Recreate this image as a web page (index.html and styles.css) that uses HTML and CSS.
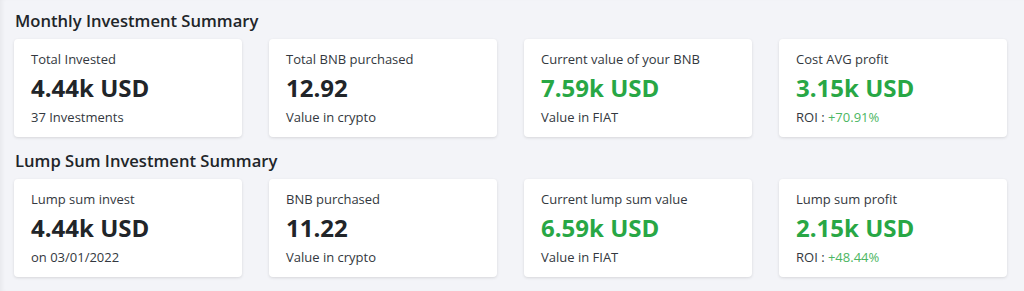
FILE: index.html
```html
<!DOCTYPE html>
<html lang="en">
<head>
  <meta charset="UTF-8">
  <meta name="viewport" content="width=device-width, initial-scale=1.0">
  <title>Investment Summary</title>
  <link rel="stylesheet" href="styles.css">
</head>
<body>
  <main class="page">
    <section class="summary">
      <h2>Monthly Investment Summary</h2>
      <div class="stat-grid">
        <div class="stat-card">
          <p class="stat-label">Total Invested</p>
          <p class="stat-value">4.44k USD</p>
          <p class="stat-note">37 Investments</p>
        </div>
        <div class="stat-card">
          <p class="stat-label">Total BNB purchased</p>
          <p class="stat-value">12.92</p>
          <p class="stat-note">Value in crypto</p>
        </div>
        <div class="stat-card">
          <p class="stat-label">Current value of your BNB</p>
          <p class="stat-value green">7.59k USD</p>
          <p class="stat-note">Value in FIAT</p>
        </div>
        <div class="stat-card">
          <p class="stat-label">Cost AVG profit</p>
          <p class="stat-value green">3.15k USD</p>
          <p class="stat-note">ROI : <span class="roi">+70.91%</span></p>
        </div>
      </div>
    </section>

    <section class="summary">
      <h2>Lump Sum Investment Summary</h2>
      <div class="stat-grid">
        <div class="stat-card">
          <p class="stat-label">Lump sum invest</p>
          <p class="stat-value">4.44k USD</p>
          <p class="stat-note">on 03/01/2022</p>
        </div>
        <div class="stat-card">
          <p class="stat-label">BNB purchased</p>
          <p class="stat-value">11.22</p>
          <p class="stat-note">Value in crypto</p>
        </div>
        <div class="stat-card">
          <p class="stat-label">Current lump sum value</p>
          <p class="stat-value green">6.59k USD</p>
          <p class="stat-note">Value in FIAT</p>
        </div>
        <div class="stat-card">
          <p class="stat-label">Lump sum profit</p>
          <p class="stat-value green">2.15k USD</p>
          <p class="stat-note">ROI : <span class="roi">+48.44%</span></p>
        </div>
      </div>
    </section>
  </main>
</body>
</html>
```

FILE: styles.css
```css
:root {
  --bg-color: #f3f4f8;
  --card-bg: #ffffff;
  --text-color: #212529;
  --label-color: #333840;
  --green: #28a745;
  --green-light: #4cb663;
}

* {
  margin: 0;
  padding: 0;
  box-sizing: border-box;
}

body {
  background: var(--bg-color);
  color: var(--text-color);
  font-family: 'Open Sans', 'Noto Sans', sans-serif;
  box-shadow: inset 4px 0 4px -2px rgba(0, 0, 0, 0.05);
  min-height: 100vh;
}

.page {
  padding: 8px 17px 0 14px;
}

.summary {
  margin-bottom: 11px;
}

.summary h2 {
  font-size: 16.6px;
  font-weight: 600;
  line-height: 26px;
  margin-left: 1px;
  margin-bottom: 5px;
}

.stat-grid {
  display: grid;
  grid-template-columns: repeat(4, 1fr);
  gap: 27px;
}

.stat-card {
  background: var(--card-bg);
  border-radius: 4px;
  box-shadow: 0 1px 3px rgba(0, 0, 0, 0.12);
  padding: 10px 17px 12px;
  height: 98px;
}

.stat-label {
  font-size: 13px;
  line-height: 20px;
  color: var(--label-color);
}

.stat-value {
  font-size: 24px;
  font-weight: 700;
  line-height: 38px;
}

.stat-value.green {
  color: var(--green);
}

.stat-note {
  font-size: 13px;
  line-height: 20px;
  color: var(--label-color);
}

.roi {
  color: var(--green-light);
}
```
